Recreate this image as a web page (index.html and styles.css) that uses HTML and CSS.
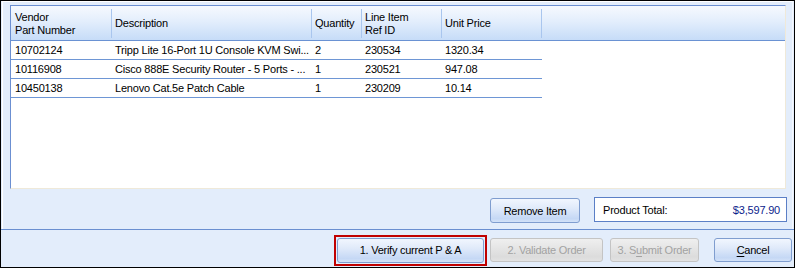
FILE: index.html
```html
<!DOCTYPE html>
<html lang="en">
<head>
  <meta charset="UTF-8" />
  <meta name="viewport" content="width=device-width, initial-scale=1.0"/>
  <title>Order Items</title>
  <link rel="stylesheet" href="styles.css">
</head>
<body>
  <div class="window">
    <div class="panel">
      <div class="grid">
        <div class="grid-head">
          <div class="head-cell pad-first">Vendor<br>Part Number</div>
          <div class="head-cell">Description</div>
          <div class="head-cell">Quantity</div>
          <div class="head-cell">Line Item<br>Ref ID</div>
          <div class="head-cell">Unit Price</div>
          <div class="head-fill"></div>
        </div>
        <div class="grid-row">
          <div class="cell pad-first">10702124</div>
          <div class="cell">Tripp Lite 16-Port 1U Console KVM Swi...</div>
          <div class="cell">2</div>
          <div class="cell">230534</div>
          <div class="cell">1320.34</div>
        </div>
        <div class="grid-row">
          <div class="cell pad-first">10116908</div>
          <div class="cell">Cisco 888E Security Router - 5 Ports - ...</div>
          <div class="cell">1</div>
          <div class="cell">230521</div>
          <div class="cell">947.08</div>
        </div>
        <div class="grid-row">
          <div class="cell pad-first">10450138</div>
          <div class="cell">Lenovo Cat.5e Patch Cable</div>
          <div class="cell">1</div>
          <div class="cell">230209</div>
          <div class="cell">10.14</div>
        </div>
      </div>

      <div class="panel-foot">
        <button type="button" class="btn btn-remove">Remove Item</button>
        <div class="total">
          <span>Product Total:</span>
          <span class="total-value">$3,597.90</span>
        </div>
      </div>
    </div>

    <div class="divider"></div>

    <div class="actions">
      <div class="highlight">
        <button type="button" class="btn btn-verify">1. Verify current P &amp; A</button>
      </div>
      <button type="button" class="btn btn-validate" disabled>2. Validate Order</button>
      <button type="button" class="btn btn-submit" disabled>3. S<u>u</u>bmit Order</button>
      <button type="button" class="btn btn-cancel"><u>C</u>ancel</button>
    </div>
  </div>
</body>
</html>
```

FILE: styles.css
```css
* {
  box-sizing: border-box;
}

body {
  margin: 0;
  font-family: "Liberation Sans", Arial, sans-serif;
  font-size: 11px;
  letter-spacing: -0.2px;
  color: #000;
}

.window {
  width: 795px;
  height: 268px;
  border: 1px solid #000;
  background-color: #e3edfb;
}

.panel {
  height: 228px;
  margin: 0 1px;
  padding: 3px 6px 0 7px;
  border-top: 1px solid #fff;
  border-left: 1px solid #fff;
  border-right: 1px solid #f4f7fd;
}

/* items grid */
.grid {
  height: 184px;
  background-color: #fff;
  border-top: 1px solid #6b8fd1;
  border-left: 1px solid #6b8fd1;
  border-right: 1px solid #efe9d9;
  border-bottom: 1px solid #efe9d9;
}

.grid-head {
  display: grid;
  grid-template-columns: 101px 200px 50px 80px 100px 1fr;
  height: 35px;
  border-bottom: 1px solid #6a92d3;
  background: linear-gradient(#f6f9fe, #e3eefc 45%, #c6dcf8);
}

.head-cell {
  position: relative;
  display: flex;
  align-items: center;
  padding: 1px 0 0 3px;
  line-height: 13px;
}

.head-cell::after {
  content: "";
  position: absolute;
  right: 0;
  top: 3px;
  bottom: 2px;
  width: 1px;
  background-color: #a9c6ee;
}

.grid-row {
  display: grid;
  grid-template-columns: 101px 200px 50px 80px 100px;
  width: 531px;
  height: 19px;
  border-bottom: 1px solid #6e96d5;
}

.cell {
  padding-left: 3px;
  line-height: 18px;
  white-space: nowrap;
  overflow: hidden;
}

.head-cell.pad-first,
.cell.pad-first {
  padding-left: 4px;
}

/* buttons */
.btn {
  height: 24px;
  padding: 0;
  font-family: "Liberation Sans", Arial, sans-serif;
  font-size: 11px;
  letter-spacing: -0.25px;
  color: #000;
  border: 1px solid #7f9dcf;
  border-radius: 3px;
  background: linear-gradient(#f1f6fe, #e0eafa 40%, #c5d8f5 85%, #d3e2f8);
}

.btn:disabled {
  color: #a2a2a2;
  border-color: #c4c4c4;
  background: linear-gradient(#efefef, #dcdcdc 80%, #e2e2e2);
}

.btn u {
  text-decoration-thickness: 1px;
  text-underline-offset: 2px;
}

.panel-foot {
  display: flex;
  justify-content: flex-end;
  align-items: flex-start;
  gap: 14px;
  margin-top: 8px;
  margin-right: -1px;
}

.btn-remove {
  width: 90px;
  height: 25px;
  margin-top: 1px;
}

.total {
  display: flex;
  justify-content: space-between;
  align-items: center;
  width: 193px;
  height: 25px;
  padding: 0 6px 0 8px;
  background-color: #fff;
  border: 1px solid #5b7fc6;
}

.total-value {
  color: #0b1d8c;
}

.divider {
  height: 1px;
  background-color: #6a8fd0;
}

/* bottom action bar */
.actions {
  display: flex;
  align-items: center;
  height: 37px;
  padding: 3px 1px 0 333px;
}

.highlight {
  padding: 1px;
  border: 2px solid #c00000;
}

.btn-verify {
  display: block;
  width: 147px;
  height: 25px;
}

.btn-validate {
  width: 113px;
  margin-left: 3px;
}

.btn-submit {
  width: 89px;
  margin-left: 7px;
}

.btn-cancel {
  width: 78px;
  margin-left: 15px;
}
```
